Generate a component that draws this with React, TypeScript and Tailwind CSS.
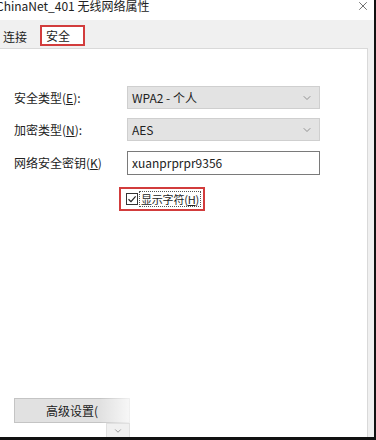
import { ChevronDown, X } from 'lucide-react';

const font = { fontFamily: '"Noto Sans CJK SC", "Liberation Sans", sans-serif' };

const Select = ({ value }: { value: string }) => (
    <div className="w-[193px] h-[23px] bg-[#e3e3e3] border border-[#cfcfcf] flex items-center justify-between pl-[4px] pr-[6px]">
        <span className="text-[12px] text-[#222]">{value}</span>
        <ChevronDown size={12} strokeWidth={1.5} className="text-[#777]" />
    </div>
);

export default function App() {
    return (
        <div className="w-[376px] h-[440px] bg-white relative overflow-hidden flex flex-col" style={font}>
            {/* Title bar */}
            <div className="h-[20px] flex items-start justify-between pr-[6px] shrink-0">
                <span className="text-[12px] leading-[12px] text-[#222] -ml-[4px] whitespace-nowrap">ChinaNet_401 无线网络属性</span>
                <X size={14} strokeWidth={1.2} className="text-[#333] -mt-[1px]" />
            </div>

            {/* Tabs */}
            <div className="flex flex-col flex-1 bg-[#f0f0f0] pr-[6px]">
                <div className="h-[28px] flex items-end shrink-0">
                    <div className="h-[22px] px-[3px] flex items-center text-[12px] text-[#222]">连接</div>
                    <div className="ml-[10px] mb-[2px] w-[45px] h-[21px] border-2 border-[#d23c3c] bg-white flex items-center pl-[4px] text-[12px] text-[#222]">
                        安全
                    </div>
                </div>

                {/* Content panel */}
                <div className="flex-1 bg-white border border-[#d9d9d9] border-l-0 flex flex-col w-[368px]">
                    <div className="mt-[37px] flex flex-col gap-[10px]">
                        <div className="flex items-center">
                            <span className="w-[127px] pl-[14px] text-[12px] text-[#222]">安全类型(<span className="underline">E</span>):</span>
                            <Select value="WPA2 - 个人" />
                        </div>
                        <div className="flex items-center -mt-[1px]">
                            <span className="w-[127px] pl-[14px] text-[12px] text-[#222]">加密类型(<span className="underline">N</span>):</span>
                            <Select value="AES" />
                        </div>
                        <div className="flex items-center">
                            <span className="w-[127px] pl-[14px] text-[12px] text-[#222]">网络安全密钥(<span className="underline">K</span>)</span>
                            <div className="w-[193px] h-[24px] border border-[#7a7a7a] bg-white flex items-center pl-[4px] text-[12px] text-[#222]">
                                xuanprprpr9356
                            </div>
                        </div>
                    </div>

                    <div className="ml-[119px] mt-[12px] w-[86px] h-[24px] border-2 border-[#d23c3c] flex items-center pl-[5px] gap-[1px] whitespace-nowrap">
                        <div className="w-[12px] h-[12px] shrink-0 border border-[#333] bg-white flex items-center justify-center">
                            <svg width="10" height="10" viewBox="0 0 10 10">
                                <path d="M1.5 5.2 L4 7.6 L8.6 2.4" fill="none" stroke="#222" strokeWidth="1.2" />
                            </svg>
                        </div>
                        <span className="text-[11px] text-[#222] border border-dotted border-[#555] leading-[14px] px-[1px] whitespace-nowrap tracking-[-0.2px]">
                            显示字符(<span className="underline">H</span>)
                        </span>
                    </div>

                    <div className="flex-1" />

                    <div className="ml-[14px] mb-[16px] w-[116px] h-[25px] relative">
                        <div className="w-full h-full bg-[#e1e1e1] border border-[#c4c4c4] flex items-center justify-center text-[12px] text-[#222]">
                            高级设置(
                        </div>
                        <div className="absolute right-[-10px] top-[-2px] w-[40px] h-[30px] bg-gradient-to-r from-transparent to-white" />
                    </div>
                    <div className="absolute left-[106px] top-[423px] w-[24px] h-[15px] bg-[#f0f0f0] border border-[#e0e0e0] flex items-center justify-center">
                        <ChevronDown size={10} strokeWidth={1.5} className="text-[#666]" />
                    </div>
                </div>
            </div>

            {/* right frame edge & bottom */}
            <div className="absolute right-0 top-0 w-[2px] h-full bg-[#111]" />
            <div className="absolute left-0 bottom-0 w-full h-[3px] bg-[#111]" />
        </div>
    );
}
